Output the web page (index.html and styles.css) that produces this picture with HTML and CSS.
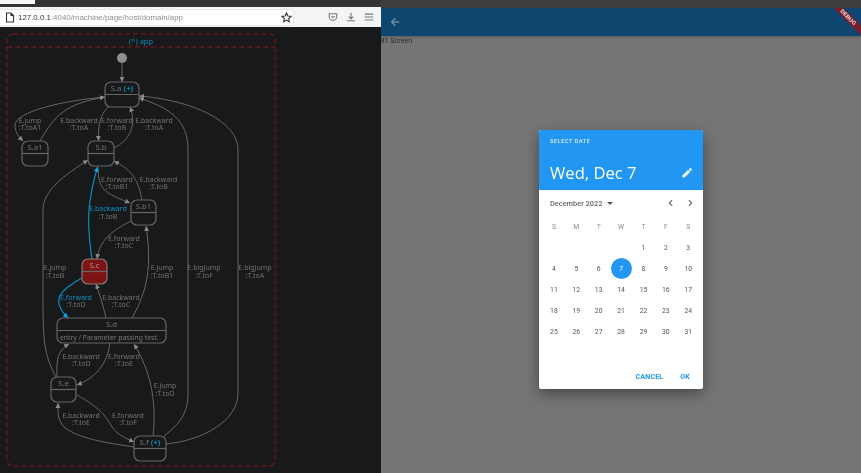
FILE: index.html
```html
<!DOCTYPE html>
<html>
<head>
<meta charset="utf-8" />
<title>app</title>
<link rel="stylesheet" href="styles.css">
</head>
<body>
<div class="wrap">
  <div class="left">
    <div class="tabbar"><div class="tab"></div></div>
    <div class="toolbar">
      <div class="urlbox">
        <svg class="ico-page" width="10" height="11" viewBox="0 0 10 11"><path d="M1.500 1h4.500l2.500 2.500v6.500h-7z M6 1v2.500h2.500" fill="none" stroke="#333" stroke-width="1.100"/></svg>
        <span class="url"><b>127.0.0.1</b>:4040/machine/page/host/domain/app</span>
        <svg class="ico-star" width="11" height="11" viewBox="0 0 12 12"><path d="M6 1l1.500 3.300 3.500.4-2.600 2.400.7 3.500-3.100-1.800-3.100 1.800.7-3.500L1 4.700l3.500-.4z" fill="none" stroke="#333" stroke-width="1.200"/></svg>
      </div>
      <div class="tools">
        <svg width="10" height="10" viewBox="0 0 12 12"><path d="M1.500 2h9v3.500a4.500 4.500 0 0 1-9 0z" fill="none" stroke="#777" stroke-width="1.300"/><path d="M4 5l2 1.700L8 5" fill="none" stroke="#777" stroke-width="1.300"/></svg>
        <svg width="10" height="10" viewBox="0 0 12 12"><path d="M6 1v7M3.200 5.500L6 8.300l2.800-2.800M1 10.500h10" fill="none" stroke="#777" stroke-width="1.300"/></svg>
        <svg width="10" height="10" viewBox="0 0 12 12"><path d="M1 2.500h10M1 6h10M1 9.500h10" fill="none" stroke="#777" stroke-width="1.300"/></svg>
      </div>
    </div>
    <svg class="diagram" width="381" height="446" viewBox="0 27 381 446">
      <defs>
        <marker id="ah" markerUnits="userSpaceOnUse" markerWidth="6" markerHeight="6" refX="5" refY="3" orient="auto"><path d="M0 .5L5 3L0 5.500z" fill="#8a8a8a"/></marker>
        <marker id="ahb" markerUnits="userSpaceOnUse" markerWidth="6" markerHeight="6" refX="5" refY="3" orient="auto"><path d="M0 .5L5 3L0 5.500z" fill="#12a5e0"/></marker>
      </defs>

      <g class="box-app">
        <rect x="7" y="34" width="268" height="432" rx="6"/>
        <path d="M7 47H275"/>
      </g>
      <text class="app-title" x="141" y="43.500">(^) app</text>

      <circle cx="122" cy="58" r="5" fill="#8f8f8f"/>
      <g class="edges">
        <path d="M122 63V82"/>
        <path d="M105 97C60 101 16 112 15 125C15 132 18 136 23 141"/>
        <path d="M40 141C55 115 65 104 105 97"/>
        <path d="M108 107C100 115 98 125 98.500 141"/>
        <path d="M114 148C130 140 137 125 130 107"/>
        <path d="M98 167C98 190 105 193 130 203"/>
        <path d="M142 200C137 175 130 170 114 161"/>
        <path d="M131 221C110 232 100 240 97 259"/>
        <path d="M132 318C148 290 152 265 146 226"/>
        <path d="M56 377C44 355 43 340 43 300L43 210C43 190 65 175 88 160"/>
        <path d="M106 318C103 305 100 295 96 284"/>
        <path d="M57 377C56 360 58 350 69 344"/>
        <path d="M110 343C107 365 95 378 77 385"/>
        <path d="M153 436C157 400 150 370 134 344"/>
        <path d="M77 395C100 408 105 415 112 427C118 435 125 438 134 442"/>
        <path d="M134 447C100 442 80 438 65 428C57 420 58 412 58 403"/>
        <path d="M164 436C178 425 188 415 188 393L188 150C188 120 170 108 139 98"/>
        <path d="M166 444C205 440 238 420 238 393L238 150C238 120 190 100 139 96"/>
      </g>
      <g class="edges-on">
        <path d="M92 259C86 220 88 200 97.500 167"/>
        <path d="M82 278C60 290 50 300 68 318"/>
      </g>

      <g class="states">
        <rect x="105" y="82" width="34" height="25" rx="6"/><path d="M105 94.500H139"/>
        <rect x="22" y="141" width="26" height="25" rx="6"/><path d="M22 153.500H48"/>
        <rect x="88" y="141" width="26" height="25" rx="6"/><path d="M88 153.500H114"/>
        <rect x="131" y="200" width="25" height="25" rx="6"/><path d="M131 212.500H156"/>
        <rect class="active" x="82" y="259" width="25" height="25" rx="6"/><path d="M82 271.500H107"/>
        <rect x="57" y="318" width="109" height="25" rx="6"/><path d="M57 330.500H166"/>
        <rect x="51" y="377" width="25" height="25" rx="6"/><path d="M51 389.500H76"/>
        <rect x="134" y="436" width="32" height="25" rx="6"/><path d="M134 448.500H166"/>
      </g>

      <g class="names">
        <text x="122" y="90.500">S.a <tspan class="plus">(+)</tspan></text>
        <text x="35" y="149.500">S.a1</text>
        <text x="101" y="149.500">S.b</text>
        <text x="143.500" y="208.500">S.b1</text>
        <text class="on" x="94.500" y="267.500">S.c</text>
        <text x="111.500" y="326.500">S.d</text>
        <text x="63.500" y="385.500">S.e</text>
        <text x="150" y="444.500">S.f <tspan class="plus">(+)</tspan></text>
      </g>
      <text class="note" x="60" y="339.500">entry / Parameter passing test.</text>

      <g class="labels">
        <text x="30" y="122.500">E.jump<tspan x="30" dy="7.800">:T.toA1</tspan></text>
        <text x="79" y="122.500">E.backward<tspan x="79" dy="7.800">:T.toA</tspan></text>
        <text x="117" y="122.500">E.forward<tspan x="117" dy="7.800">:T.toB</tspan></text>
        <text x="154" y="122.500">E.backward<tspan x="154" dy="7.800">:T.toA</tspan></text>
        <text x="117" y="181.500">E.forward<tspan x="117" dy="7.800">:T.toB1</tspan></text>
        <text x="158.500" y="181.500">E.backward<tspan x="158.500" dy="7.800">:T.toB</tspan></text>
        <text x="108" y="211"><tspan class="label-on">E.backward</tspan><tspan x="108" dy="7.800">:T.toB</tspan></text>
        <text x="124" y="240.500">E.forward<tspan x="124" dy="7.800">:T.toC</tspan></text>
        <text x="55" y="270">E.jump<tspan x="55" dy="7.800">:T.toB</tspan></text>
        <text x="162" y="270">E.jump<tspan x="162" dy="7.800">:T.toB1</tspan></text>
        <text x="204" y="270">E.bigJump<tspan x="204" dy="7.800">:T.toF</tspan></text>
        <text x="255" y="270">E.bigJump<tspan x="255" dy="7.800">:T.toA</tspan></text>
        <text x="76" y="299.500"><tspan class="label-on">E.forward</tspan><tspan x="76" dy="7.800">:T.toD</tspan></text>
        <text x="121" y="299.500">E.backward<tspan x="121" dy="7.800">:T.toC</tspan></text>
        <text x="81" y="358.500">E.backward<tspan x="81" dy="7.800">:T.toD</tspan></text>
        <text x="124" y="358.500">E.forward<tspan x="124" dy="7.800">:T.toE</tspan></text>
        <text x="165" y="388">E.jump<tspan x="165" dy="7.800">:T.toD</tspan></text>
        <text x="81" y="417.500">E.backward<tspan x="81" dy="7.800">:T.toE</tspan></text>
        <text x="128" y="417.500">E.forward<tspan x="128" dy="7.800">:T.toF</tspan></text>
      </g>
    </svg>
  </div>

  <div class="right">
    <div class="topstrip"></div>
    <div class="appbar">
      <svg class="back" width="10" height="10" viewBox="0 0 12 12"><path d="M11 6H2M6.500 1.500L2 6L6.500 10.500" fill="none" stroke="#6f8da5" stroke-width="1.800"/></svg>
    </div>
    <div class="screen">B1 Screen</div>
    <div class="bannerclip"><div class="banner">DEBUG</div></div>

    <div class="dialog">
      <div class="dlg-head">
        <div class="dlg-small">SELECT DATE</div>
        <div class="dlg-row">
          <span class="dlg-date">Wed, Dec 7</span>
          <svg width="10" height="10" viewBox="0 0 12 12"><path d="M0.500 11.500V9L7.500 2L10 4.500L3 11.500zM8.300 1.200L9.300.2a.7.7 0 0 1 1 0l1.500 1.500a.7.7 0 0 1 0 1l-1 1z" fill="#fff"/></svg>
        </div>
      </div>
      <div class="dlg-body">
        <div class="monthrow">
          <span class="month">December 2022</span>
          <svg class="caret" width="6" height="3" viewBox="0 0 6 3"><path d="M0 0h6L3 3z" fill="#555"/></svg>
          <svg class="chev prev" width="5" height="8" viewBox="0 0 6 9"><path d="M5 1L1.500 4.500L5 8" fill="none" stroke="#666" stroke-width="1.300"/></svg>
          <svg class="chev" width="5" height="8" viewBox="0 0 6 9"><path d="M1 1l3.500 3.500L1 8" fill="none" stroke="#666" stroke-width="1.300"/></svg>
        </div>
        <div class="days heads"><span>S</span><span>M</span><span>T</span><span>W</span><span>T</span><span>F</span><span>S</span></div>
        <div class="days">
          <span></span><span></span><span></span><span></span><span>1</span><span>2</span><span>3</span>
          <span>4</span><span>5</span><span>6</span><span class="sel">7</span><span>8</span><span>9</span><span>10</span>
          <span>11</span><span>12</span><span>13</span><span>14</span><span>15</span><span>16</span><span>17</span>
          <span>18</span><span>19</span><span>20</span><span>21</span><span>22</span><span>23</span><span>24</span>
          <span>25</span><span>26</span><span>27</span><span>28</span><span>29</span><span>30</span><span>31</span>
        </div>
        <div class="actions"><span>CANCEL</span><span>OK</span></div>
      </div>
    </div>
  </div>
</div>
</body>
</html>
```
FILE: styles.css
```css
html, body {margin:0; padding:0; height:100%; overflow:hidden; background:#18191b;}
.wrap {display:flex; width:861px; height:473px; font-family:"Roboto", sans-serif; filter:blur(.45px);}

.left {width:381px; height:473px; background:#18191b; flex:none;}
.tabbar {height:7px; background:#353332;}
.tab {width:35px; height:4px; background:#f4f4f4;}
.toolbar {height:20px; background:#f4f4f6; display:flex; align-items:center;}
.urlbox {width:294px; height:17px; background:#fff; border:1px solid #e6e6e6; border-left:0; border-radius:0 3px 3px 0; display:flex; align-items:center; box-sizing:border-box; padding:0 1px 0 5px;}
.ico-page {flex:none;}
.url {flex:1; margin-left:3px; font:7.900px "Liberation Sans", sans-serif; color:#8f8f8f; white-space:nowrap;}
.url b {font-weight:normal; color:#333;}
.tools {flex:1; display:flex; justify-content:flex-end; gap:8px; padding-right:7px;}
.diagram {display:block;}

.box-app rect, .box-app path {fill:none; stroke:#82141a; stroke-width:1.100; stroke-dasharray:5 3;}
.app-title {font:7.500px "Noto Sans", sans-serif; fill:#0d86b5; text-anchor:middle;}
.edges path {fill:none; stroke:#666; stroke-width:1; marker-end:url(#ah);}
.edges-on path {fill:none; stroke:#0e93c8; stroke-width:1.100; marker-end:url(#ahb);}
.states rect {fill:none; stroke:#666; stroke-width:1.200;}
.states path {fill:none; stroke:#666; stroke-width:1.200;}
.states rect.active {fill:#7c1414; stroke:#8a7a7a;}
.names text {font:7.800px "Noto Sans", sans-serif; fill:#707070; text-anchor:middle;}
.names text.on {fill:#b58a8a;}
.plus {fill:#0d86b5; font-weight:bold;}
.note {font:6.800px "Noto Sans", sans-serif; fill:#787878;}
.labels text {font:7px "Noto Sans", sans-serif; fill:#727272; text-anchor:middle;}
.labels .label-on {fill:#0d8fc2;}

.right {position:relative; flex:1; background:#757575; overflow:hidden;}
.topstrip {height:8px; background:#3f3e3d;}
.appbar {height:28px; background:#0f466f; display:flex; align-items:center; padding-left:9px; box-shadow:0 1px 3px rgba(0,0,0,.25);}
.screen {font:7.200px "Roboto", sans-serif; color:#2c2c2c; margin-left:-1px;}
.bannerclip {position:absolute; top:8px; right:0; width:40px; height:40px; overflow:hidden;}
.banner {position:absolute; top:6px; right:-17px; width:60px; height:7px; background:#7b1e2c; transform:rotate(45deg); text-align:center; font:bold 5.500px/7px "Liberation Sans", sans-serif; color:#f3e6e6;}

.dialog {position:absolute; left:158px; top:130px; width:164px; height:259px; background:#fff; border-radius:2px; box-shadow:0 5px 14px rgba(0,0,0,.4); overflow:hidden;}
.dlg-head {height:60px; background:#2196f3; color:#fff; box-sizing:border-box; padding:8px 11px 0;}
.dlg-small {font:500 5.500px "Roboto", sans-serif; letter-spacing:.6px; color:#e8f3fd;}
.dlg-row {display:flex; justify-content:space-between; align-items:center; margin-top:17px; line-height:24px;}
.dlg-date {font:16.600px/24px "Open Sans", sans-serif;}
.dlg-body {padding:0 10px 0 11px;}
.monthrow {display:flex; align-items:center; height:26px; font:500 7.400px "Roboto", sans-serif; color:#666;}
.caret {margin-left:5px;}
.chev.prev {margin-left:auto; margin-right:15px;}
.days {display:grid; grid-template-columns:repeat(7, 22.400px); grid-auto-rows:21px; margin-left:-7.300px; font:400 6.800px "Roboto", sans-serif; color:#555;}
.days span {display:flex; align-items:center; justify-content:center;}
.heads {color:#8a8a8a;}
.days span.sel {color:#fff; background:#2196f3; border-radius:50%; width:21px; justify-self:center;}
.actions {display:flex; justify-content:flex-end; gap:17px; margin-top:31px; padding-right:3px; font:bold 7px "Roboto", sans-serif; color:#2196f3; letter-spacing:.2px;}
```
